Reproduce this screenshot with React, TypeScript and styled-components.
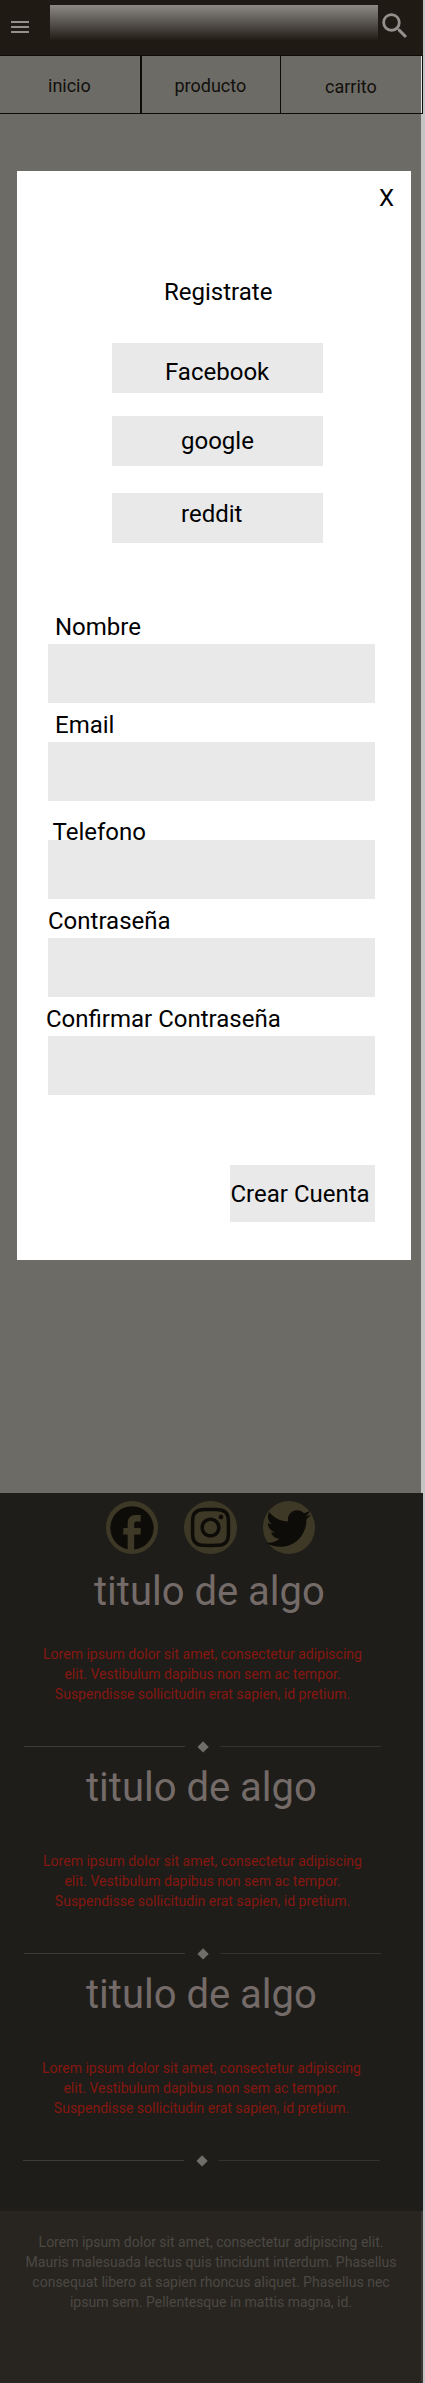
import React from "react";
import styled, { createGlobalStyle } from "styled-components";
import { FaInstagram, FaTwitter } from "react-icons/fa";
import { MdFacebook, MdMenu, MdSearch } from "react-icons/md";

const GlobalStyle = createGlobalStyle`
  *, *::before, *::after { box-sizing: border-box; }
  body {
    margin: 0;
    background: #c5c3c3;
    font-family: Roboto, "Liberation Sans", sans-serif;
  }
`;

const Page = styled.div`
  position: relative;
  width: 425px;
  height: 2383px;
  overflow: hidden;
  display: flex;
  flex-direction: column;
`;

const Header = styled.header`
  width: 423px;
  height: 55px;
  padding: 5px 0 0 8px;
  display: flex;
  background: #1f1a13;
`;

const MenuButton = styled.button`
  display: flex;
  width: 24px;
  height: 24px;
  margin: 10px 18px 0 0;
  padding: 0;
  border: 0;
  background: none;
  color: #93908d;
`;

const SearchInput = styled.input`
  width: 328px;
  height: 36px;
  padding: 0;
  border: 0;
  background: linear-gradient(#8d8a86, #1f1a13);
`;

const SearchButton = styled(MenuButton)`
  width: 34px;
  height: 34px;
  margin: 4px 0 0 0;
`;

const Nav = styled.nav`
  display: flex;
  width: 423px;
  height: 59px;
  border: 1px solid #0d0b08;
  border-left: 0;
  background: linear-gradient(to right, #6d6b66 421px, #e2e1e1 421px);
`;

const NavItem = styled.a<{ $width: number; $line: number; $left: number; $drop?: number }>`
  width: ${(p) => p.$width}px;
  border-right: ${(p) => p.$line}px solid #0d0b08;
  padding: ${(p) => 18 + (p.$drop ?? 0)}px 0 0 ${(p) => p.$left}px;
  font-size: 18px;
  line-height: 24px;
  color: #12100c;
`;

const Content = styled.main`
  width: 421px;
  height: 1379px;
  background: #6d6b66;
`;

const Info = styled.section`
  width: 423px;
  height: 718px;
  padding-top: 8px;
  border-right: 1px solid #191d1f;
  background: #1e1d19;
`;

const Socials = styled.div`
  display: flex;
  gap: 26px;
  padding-left: 106px;
`;

const Social = styled.a<{ $drop?: number }>`
  display: flex;
  align-items: center;
  justify-content: center;
  width: 52.4px;
  height: 53px;
  padding-top: ${(p) => p.$drop ?? 0}px;
  border-radius: 50%;
  background: #3e3826;
  color: #0d0c08;

  svg {
    flex: none;
  }
`;

const Article = styled.article<{ $textGap: number; $shift?: number }>`
  p {
    margin-top: ${(p) => p.$textGap}px;
  }
  p, div {
    margin-left: ${(p) => p.$shift ?? 0}px;
  }
`;

const Title = styled.h2<{ $left: number; $top: number }>`
  margin: ${(p) => p.$top}px 0 0;
  padding-left: ${(p) => p.$left}px;
  font-size: 40px;
  font-weight: 400;
  line-height: 48px;
  color: #746b69;
  white-space: nowrap;
`;

const Text = styled.p`
  width: 405px;
  margin: 0;
  font-size: 14px;
  line-height: 20px;
  text-align: center;
  color: #861710;
`;

const Divider = styled.div`
  display: flex;
  align-items: center;
  width: 381px;
  height: 13px;
  margin-top: 36px;
  padding-left: 24px;
`;

const Line = styled.span<{ $color: string }>`
  width: 161px;
  height: 1px;
  background: ${(p) => p.$color};
`;

const Diamond = styled.span`
  width: 8.2px;
  height: 8.2px;
  margin: 1px 13.1px 0 13.7px;
  background: #706e69;
  transform: rotate(45deg);
`;

const Footer = styled.footer`
  width: 423px;
  height: 172px;
  padding: 21px 0 0;
  background: linear-gradient(to right, #282520 421px, #393633 421px);
`;

const FooterText = styled(Text)`
  width: 422px;
  color: #4b4843;
`;

const Modal = styled.div`
  position: absolute;
  top: 171px;
  left: 17px;
  width: 394px;
  height: 1089px;
  display: flex;
  flex-direction: column;
  background: #fff;
  font-size: 24px;
  line-height: 28px;
  color: #000;
`;

const Close = styled.button`
  align-self: flex-end;
  margin: 13px 17px 0 0;
  padding: 0;
  border: 0;
  background: none;
  font: inherit;
  color: inherit;
`;

const Heading = styled.h1`
  margin: 66px 0 37px 147px;
  font-size: inherit;
  font-weight: 400;
`;

const Provider = styled.button<{ $left: number; $top: number; $gap: number }>`
  width: 211px;
  height: 50px;
  flex: none;
  margin: 0 0 ${(p) => p.$gap}px 95px;
  padding: ${(p) => p.$top}px 0 0 ${(p) => p.$left}px;
  display: flex;
  align-items: flex-start;
  border: 0;
  background: #e9e9e9;
  font: inherit;
  color: inherit;
`;

const Form = styled.form`
  padding-left: 31px;
`;

const Label = styled.label<{ $left: number; $top: number }>`
  display: block;
  height: 39px;
  padding-top: ${(p) => p.$top}px;
  margin-left: ${(p) => p.$left}px;
`;

const Input = styled.input`
  display: block;
  width: 327px;
  height: 59px;
  border: 0;
  background: #e9e9e9;
`;

const Submit = styled.button`
  display: block;
  width: 145px;
  height: 57px;
  margin: 70px 0 0 182px;
  padding: 0 0 0 0.5px;
  border: 0;
  background: #e9e9e9;
  font: inherit;
  text-align: left;
  color: inherit;
  white-space: nowrap;
`;

const fields = [
  { name: "Nombre", left: 7, top: 8 },
  { name: "Email", left: 7, top: 8 },
  { name: "Telefono", left: 4.5, top: 17 },
  { name: "Contraseña", left: 0, top: 8 },
  { name: "Confirmar Contraseña", left: -2, top: 8 },
];

const articles = [
  { left: 94, top: 14, textGap: 28, shift: 0 },
  { left: 86, top: 11, textGap: 39, shift: 0 },
  { left: 86, top: 11, textGap: 39, shift: -1 },
];

export default function App() {
  return (
    <Page>
      <GlobalStyle />
      <Header>
        <MenuButton aria-label="menu"><MdMenu size={24} /></MenuButton>
        <SearchInput />
        <SearchButton aria-label="buscar"><MdSearch size={34} /></SearchButton>
      </Header>
      <Nav>
        <NavItem $width={142} $line={2} $left={48}>inicio</NavItem>
        <NavItem $width={139} $line={1} $left={32.5}>producto</NavItem>
        <NavItem $width={141} $line={0} $left={44} $drop={1}>carrito</NavItem>
      </Nav>
      <Content />
      <Info>
        <Socials>
          <Social><MdFacebook size={52} /></Social>
          <Social><FaInstagram size={45} /></Social>
          <Social $drop={2}><FaTwitter size={45} /></Social>
        </Socials>
        {articles.map((a, i) => (
          <Article key={i} $textGap={a.textGap} $shift={a.shift}>
            <Title $left={a.left} $top={a.top}>titulo de algo</Title>
            <Text>
              Lorem ipsum dolor sit amet, consectetur adipiscing<br />
              elit. Vestibulum dapibus non sem ac tempor.<br />
              Suspendisse sollicitudin erat sapien, id pretium.
            </Text>
            <Divider>
              <Line $color="#3d3c38" />
              <Diamond />
              <Line $color="#33322e" />
            </Divider>
          </Article>
        ))}
      </Info>
      <Footer>
        <FooterText>
          Lorem ipsum dolor sit amet, consectetur adipiscing elit.<br />
          Mauris malesuada lectus quis tincidunt interdum. Phasellus<br />
          consequat libero at sapien rhoncus aliquet. Phasellus nec<br />
          ipsum sem. Pellentesque in mattis magna, id.
        </FooterText>
      </Footer>
      <Modal role="dialog">
        <Close>X</Close>
        <Heading>Registrate</Heading>
        <Provider $left={53} $top={15} $gap={23}>Facebook</Provider>
        <Provider $left={69} $top={11} $gap={27}>google</Provider>
        <Provider $left={69} $top={7} $gap={62}>reddit</Provider>
        <Form>
          {fields.map((f) => (
            <React.Fragment key={f.name}>
              <Label $left={f.left} $top={f.top}>{f.name}</Label>
              <Input />
            </React.Fragment>
          ))}
          <Submit type="button">Crear Cuenta</Submit>
        </Form>
      </Modal>
    </Page>
  );
}
